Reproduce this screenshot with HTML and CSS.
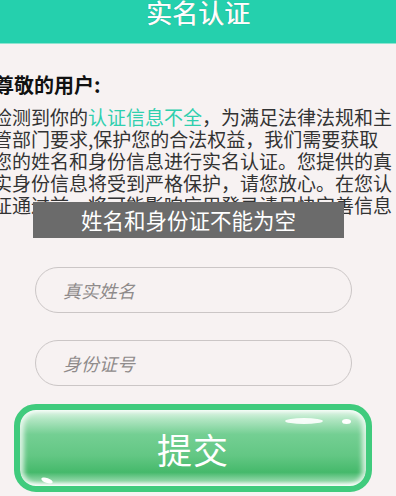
FILE: index.html
```html
<!DOCTYPE html>
<html lang="zh">

<head>
    <meta charset="UTF-8">
    <meta name="viewport" content="width=device-width, initial-scale=1.0">
    <title>实名认证</title>
    <link rel="stylesheet" href="styles.css">
</head>

<body>

    <div class="topBar">
        <h3>实名认证</h3>
    </div>

    <div class="notice">
        <h4 class="hello">尊敬的用户:</h4>
        <p class="msg">检测到你的<span class="hl">认证信息不全</span>，为满足法律法规和主管部门要求,保护您的合法权益，我们需要获取您的姓名和身份信息进行实名认证。您提供的真实身份信息将受到严格保护，请您放心。在您认证通过前，将可能影响应用登录请尽快完善信息</p>
    </div>

    <div class="form">
        <input class="field" type="text" placeholder="真实姓名">
        <input class="field" type="text" placeholder="身份证号">
        <div class="submitBtn">
            <span class="shine s1"></span>
            <span class="shine s2"></span>
            <span class="shine s3"></span>
            <span class="label">提交</span>
        </div>
    </div>

    <!-- toast -->
    <div class="toast">姓名和身份证不能为空</div>

</body>

</html>
```

FILE: styles.css
```css
* {margin: 0; padding: 0; box-sizing: border-box;}
html, body {width: 396px; height: 496px; overflow: hidden;}
body {background: #f7f2f2; font-family: "Noto Sans CJK SC", "Noto Sans", sans-serif; position: relative;}

.topBar {height: 44px; background: #25d0ad; border-bottom: 1px solid #8fe4d0;}
.topBar h3 {color: #fff; font-size: 26px; line-height: 24px; font-weight: normal; text-align: center; text-shadow: 0 0 1px rgba(0,0,0,.3), 0.4px 0 0 #fff;}

.notice {margin-left: -7px; width: 402px;}
.notice .hello {margin-top: 29px; font-size: 20px; line-height: 24px; font-weight: bold; color: #111; margin-left: 1px;}
.notice .msg {margin-top: 9px; font-size: 19px; line-height: 22px; color: #333;}
.notice .hl {color: #2fcfae;}

.form {display: flex; flex-direction: column; align-items: flex-start; padding-top: 51px;}
.field {width: 317px; height: 46px; margin-left: 35px; border: 1px solid #cbc6c6; border-radius: 23px; background: transparent; padding-left: 27px; font-family: inherit; font-size: 18px; outline: none;}
.field::placeholder {color: #8f8b8b; font-style: italic;}
.field + .field {margin-top: 27px;}

.submitBtn {position: relative; margin: 18px 0 0 14px; width: 358px; height: 88px; border: 6px solid #40cb7d; border-radius: 22px;
    background: linear-gradient(to bottom, #e4f7ea 0%, #b2e6c3 12%, #74cf93 32%, #63c784 60%, #45b96b 82%, #8fd6a6 93%, #f0fbf3 100%);
    box-shadow: inset 4px 0 5px rgba(255,255,255,.75), inset -4px 0 5px rgba(255,255,255,.75);
    display: flex; align-items: center; justify-content: center;}
.submitBtn .label {color: #fff; font-size: 35px; letter-spacing: 1px; position: relative;}
.shine {position: absolute; background: #fff; border-radius: 50%;}
.shine.s1 {left: 265px; top: 8px; width: 38px; height: 6px; opacity: .9;}
.shine.s2 {left: 322px; top: 9px; width: 9px; height: 5px;}
.shine.s3 {left: 21px; top: 68px; width: 12px; height: 5px; transform: rotate(20deg);}

.toast {position: absolute; left: 33px; top: 202px; width: 311px; height: 36px; background: #6b6b6b; color: #fff; font-size: 21.5px; line-height: 36px; text-align: center;}
```
